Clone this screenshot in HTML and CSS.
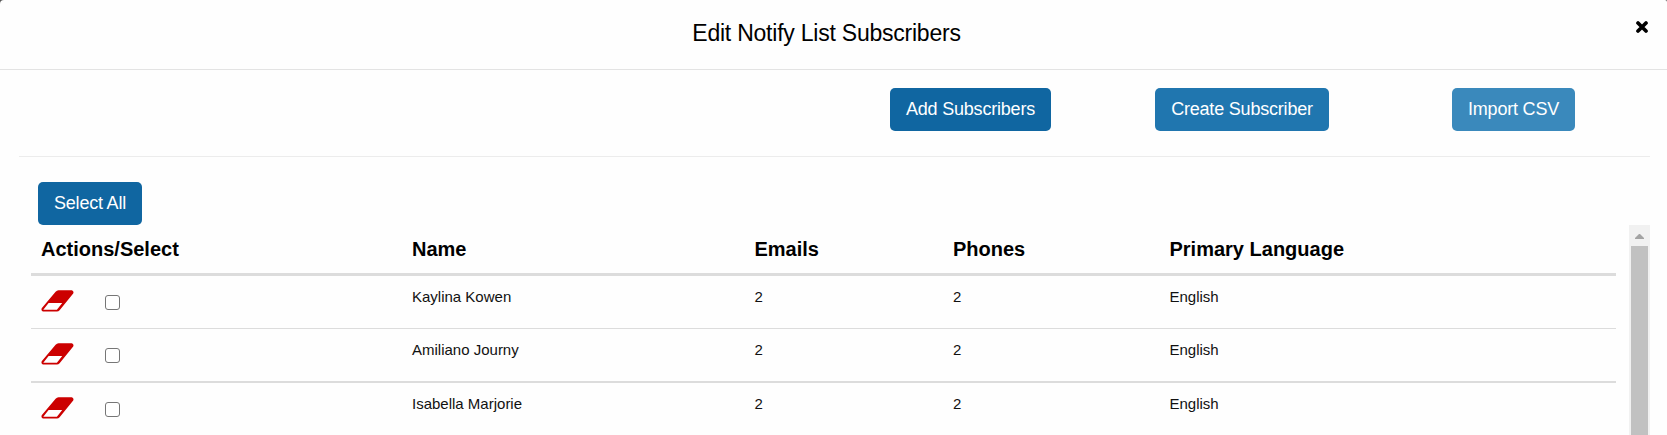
FILE: index.html
```html
<!DOCTYPE html>
<html lang="en">
<head>
<meta charset="utf-8">
<title>Edit Notify List Subscribers</title>
<link rel="stylesheet" href="styles.css">
</head>
<body>
<svg class="defs" aria-hidden="true">
  <symbol id="eraser" viewBox="0 0 33 22">
    <path fill="#cc0000" fill-rule="evenodd" d="M17.5.2H30.7Q33.2.8 32.2 3.5L18.6 20.2Q17.5 21.4 15.9 21.4H1.9Q-.2 20.5.7 18.2L14.6 1.7Q15.9.2 17.5.2ZM7.6 13L2.3 19.8H15.9L21.2 13Z"/>
  </symbol>
</svg>
<main class="modal">
  <header class="modal-header">
    <h1 class="title">Edit Notify List Subscribers</h1>
    <button class="close" aria-label="Close">
      <svg width="12" height="12" viewBox="0 0 12 12"><path d="M2 2L10 10M10 2L2 10" stroke="#000" stroke-width="3.7" stroke-linecap="round"/></svg>
    </button>
  </header>
  <div class="toolbar">
    <button class="btn btn-add">Add Subscribers</button>
    <button class="btn btn-create">Create Subscriber</button>
    <button class="btn btn-import">Import CSV</button>
  </div>
  <div class="select-bar"><button class="btn btn-all">Select All</button></div>
  <div class="list">
    <div class="grid">
      <div class="row head"><div>Actions/Select</div><div>Name</div><div>Emails</div><div>Phones</div><div>Primary Language</div></div>
      <div class="row first"><div class="actions"><svg class="eraser"><use href="#eraser"/></svg><input class="check" type="checkbox" aria-label="Select Kaylina Kowen"></div><div>Kaylina Kowen</div><div>2</div><div>2</div><div>English</div></div>
      <div class="row second"><div class="actions"><svg class="eraser"><use href="#eraser"/></svg><input class="check" type="checkbox" aria-label="Select Amiliano Journy"></div><div>Amiliano Journy</div><div>2</div><div>2</div><div>English</div></div>
      <div class="row third"><div class="actions"><svg class="eraser"><use href="#eraser"/></svg><input class="check" type="checkbox" aria-label="Select Isabella Marjorie"></div><div>Isabella Marjorie</div><div>2</div><div>2</div><div>English</div></div>
    </div>
    <div class="scrollbar">
      <svg class="arrow" width="9" height="5" viewBox="0 0 9 5"><path d="M0 5V4L4 0H5L9 4V5Z" fill="#a3a3a3"/></svg>
      <div class="thumb"></div>
    </div>
  </div>
</main>
</body>
</html>
```
FILE: styles.css
```css
* { box-sizing: border-box; }
body {
  margin: 0;
  height: 435px;
  overflow: hidden;
  background: #555;
  color: #000;
  font-family: "Liberation Sans", Arial, sans-serif;
}
.defs { display: none; }
.modal {
  height: 435px;
  display: flex;
  flex-direction: column;
  background: #fefefe;
  border-radius: 4px 2px 0 0;
  overflow: hidden;
}
.modal-header {
  flex: none;
  height: 70px;
  display: grid;
  grid-template-columns: 46px 1fr 60px;
  border-bottom: 1px solid #e3e3e3;
}
.title {
  grid-column: 2;
  margin: 0;
  padding: 19px 0 0 0;
  text-align: center;
  font-size: 23px;
  font-weight: 400;
  line-height: 28px;
  letter-spacing: -0.23px;
}
.close {
  align-self: start;
  margin: 21px 0 0 29px;
  padding: 0;
  width: 12px;
  height: 12px;
  border: 0;
  background: none;
}
.close svg { display: block; }
.toolbar {
  flex: none;
  display: flex;
  height: 87px;
  margin: 0 17px 0 19px;
  padding: 18px 0 0 871px;
  border-bottom: 1px solid #ececec;
}
.btn {
  height: 43px;
  padding: 0 0 2px;
  border: 0;
  border-radius: 5px;
  color: #fff;
  font: 18px/22px "Liberation Sans", Arial, sans-serif;
  letter-spacing: -0.2px;
  white-space: nowrap;
}
.btn-add { width: 161px; background: #1066a1; }
.btn-create { width: 174px; margin-left: 104px; background: #2076af; }
.btn-import { width: 123px; margin-left: 123px; background: #3a89bc; }
.select-bar { flex: none; height: 68px; padding: 25px 0 0 38px; }
.btn-all { width: 104px; background: #1066a1; }
.list {
  flex: 1;
  display: flex;
  justify-content: space-between;
  padding: 0 17px 0 31px;
  overflow: hidden;
}
.grid { width: 1585px; }
.row {
  display: grid;
  grid-template-columns: 371px 342.5px 198.5px 216.5px 1fr;
  padding-left: 10px;
  font-size: 15px;
  line-height: 18px;
  padding-top: 12px;
  color: #111;
}
.head {
  height: 51px;
  padding-top: 12px;
  border-bottom: 3px solid #dcdcdc;
  font-size: 20px;
  font-weight: 700;
  line-height: 24px;
  color: #000;
}
.first { height: 53px; border-bottom: 1px solid #dcdcdc; }
.second { height: 54px; border-bottom: 2px solid #dcdcdc; }
.third { height: 54px; }
.actions { display: flex; align-items: flex-start; }
.eraser { width: 33px; height: 22px; margin-top: 2px; }
.check {
  appearance: none;
  width: 15px;
  height: 15px;
  margin: 7px 0 0 31px;
  border: 1px solid #767676;
  border-radius: 3px;
  background: #fff;
}
.scrollbar {
  width: 21px;
  display: flex;
  flex-direction: column;
  align-items: center;
  padding-top: 9px;
  background: #f1f1f1;
}
.arrow { flex: none; margin-right: 1px; }
.thumb { flex: 1; width: 17px; margin-top: 7px; background: #c1c1c1; }
```
